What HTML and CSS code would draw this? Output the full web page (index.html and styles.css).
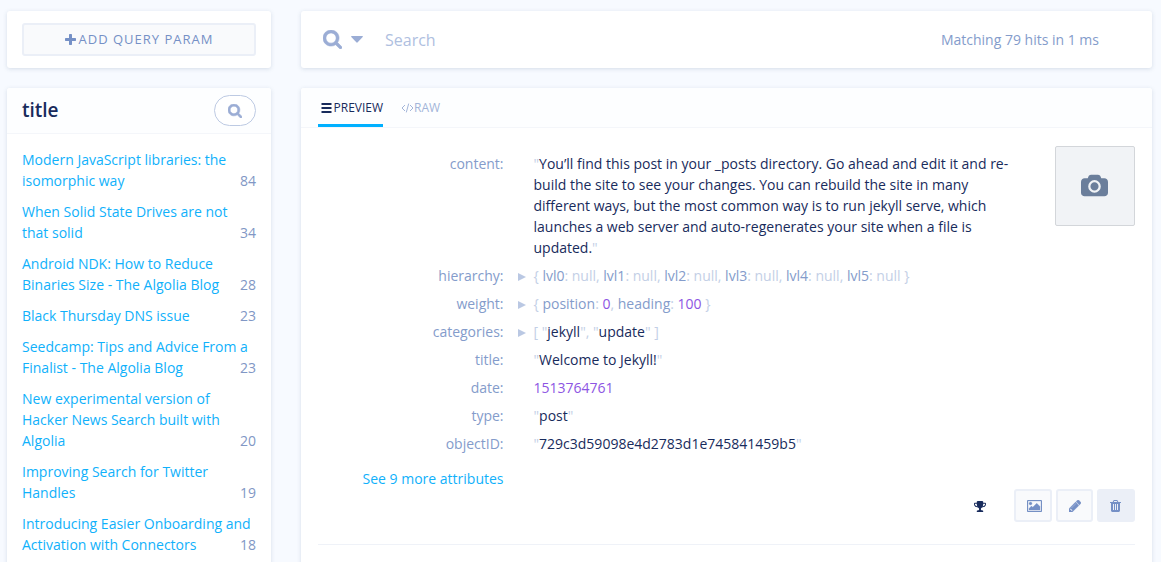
FILE: index.html
```html
<!DOCTYPE html>
<html lang="en">
<head>
<meta charset="utf-8">
<title>Index browser</title>
<link rel="stylesheet" href="styles.css">
</head>
<body>
<svg class="sprite" aria-hidden="true">
  <symbol id="search" viewBox="64 128 1664 1664"><path d="M1216 832q0-185-131.500-316.500t-316.500-131.500-316.500 131.500-131.500 316.500 131.500 316.500 316.500 131.500 316.500-131.500 131.500-316.500zm512 832q0 52-38 90t-90 38q-54 0-90-38l-343-342q-179 124-399 124-143 0-273.500-55.500t-225-150-150-225-55.500-273.500 55.500-273.500 150-225 225-150 273.500-55.500 273.500 55.500 225 150 150 225 55.500 273.500q0 220-124 399l343 343q37 37 37 90z"/></symbol>
</svg>
<div class="page">
  <aside class="sidebar">
    <section class="card param-card">
      <button class="param-button"><svg class="plus" viewBox="192 128 1408 1408"><path d="M1600 736v192q0 40-28 68t-68 28h-416v416q0 40-28 68t-68 28h-192q-40 0-68-28t-28-68v-416h-416q-40 0-68-28t-28-68v-192q0-40 28-68t68-28h416v-416q0-40 28-68t68-28h192q40 0 68 28t28 68v416h416q40 0 68 28t28 68z"/></svg><span>ADD QUERY PARAM</span></button>
    </section>
    <section class="card facet-card">
      <header class="facet-header"><h2>title</h2><button class="pill"><svg><use href="#search"/></svg></button></header>
      <ul class="facets">
        <li><a>Modern JavaScript libraries: the<br>isomorphic way</a><span>84</span></li>
        <li><a>When Solid State Drives are not<br>that solid</a><span>34</span></li>
        <li><a>Android NDK: How to Reduce<br>Binaries Size - The Algolia Blog</a><span>28</span></li>
        <li><a>Black Thursday DNS issue</a><span>23</span></li>
        <li><a>Seedcamp: Tips and Advice From a<br>Finalist - The Algolia Blog</a><span>23</span></li>
        <li><a>New experimental version of<br>Hacker News Search built with<br>Algolia</a><span>20</span></li>
        <li><a>Improving Search for Twitter<br>Handles</a><span>19</span></li>
        <li><a>Introducing Easier Onboarding and<br>Activation with Connectors</a><span>18</span></li>
      </ul>
    </section>
  </aside>
  <main class="main">
    <section class="card search-card">
      <svg class="search-icon"><use href="#search"/></svg>
      <svg class="caret" viewBox="0 0 12 7"><path d="M.8 0h10.400q1.100.1.500 1L6.700 6.300q-.7.700-1.400 0L.3 1Q-.3.100.8 0z"/></svg>
      <span class="placeholder">Search</span>
      <span class="stats">Matching 79 hits in 1 ms</span>
    </section>
    <section class="card results">
      <nav class="tabs">
        <a class="tab active"><svg class="bars" viewBox="0 0 11 10"><path d="M.5 0h10v2H.5zM.5 4h10v2H.5zM.5 8h10v2H.5z"/></svg>PREVIEW</a>
        <a class="tab"><svg class="code" viewBox="0 0 13 10"><path d="M4 2 1 5l3 3M9 2l3 3-3 3M7.700.6 5.300 9.400"/></svg>RAW</a>
      </nav>
      <article class="hit">
        <div class="hit-top">
          <dl class="attributes">
            <dt>content:</dt><i></i><dd><s>"</s>You’ll find this post in your _posts directory. Go ahead and edit it and re-<br>build the site to see your changes. You can rebuild the site in many<br>different ways, but the most common way is to run jekyll serve, which<br>launches a web server and auto-regenerates your site when a file is<br>updated.<s>"</s></dd>
            <dt>hierarchy:</dt><i class="arrow"></i><dd><s>{ <b>lvl0</b>: null, <b>lvl1</b>: null, <b>lvl2</b>: null, <b>lvl3</b>: null, <b>lvl4</b>: null, <b>lvl5</b>: null }</s></dd>
            <dt>weight:</dt><i class="arrow"></i><dd><s>{ <b>position</b>: <em>0</em>, <b>heading</b>: <em>100</em> }</s></dd>
            <dt>categories:</dt><i class="arrow"></i><dd><s>[ "</s>jekyll<s>", "</s>update<s>" ]</s></dd>
            <dt>title:</dt><i></i><dd><s>"</s>Welcome to Jekyll!<s>"</s></dd>
            <dt>date:</dt><i></i><dd><em>1513764761</em></dd>
            <dt>type:</dt><i></i><dd><s>"</s>post<s>"</s></dd>
            <dt>objectID:</dt><i></i><dd><s>"</s>729c3d59098e4d2783d1e745841459b5<s>"</s></dd>
          </dl>
          <div class="thumb"><svg viewBox="-64 128 1920 1536"><path d="M896 672q119 0 203.500 84.500t84.500 203.500-84.500 203.500-203.500 84.500-203.500-84.500-84.500-203.500 84.500-203.500 203.500-84.500zm704-288q106 0 181 75t75 181v768q0 106-75 181t-181 75h-1408q-106 0-181-75t-75-181v-768q0-106 75-181t181-75h224l51-136q19-49 69.500-84.500t103.500-35.500h512q53 0 103.500 35.500t69.500 84.500l51 136zm-704 1024q185 0 316.500-131.500t131.500-316.500-131.500-316.500-316.500-131.500-316.500 131.500-131.500 316.500 131.500 316.500 316.500 131.500z"/></svg></div>
        </div>
        <a class="more">See 9 more attributes</a>
        <div class="actions">
          <svg class="trophy" viewBox="64 128 1664 1536"><path d="M522 883q-74-162-74-371h-256v96q0 78 94.500 162t235.500 113zm1078-275v-96h-256q0 209-74 371 141-29 235.500-113t94.500-162zm128-128v128q0 71-41.500 143t-112 130-173 97.500-215.500 44.500q-42 54-95 95-38 34-52.500 72.500t-14.500 89.500q0 54 30.500 91t97.500 37q75 0 133.500 45.500t58.500 114.500v64q0 14-9 23t-23 9h-832q-14 0-23-9t-9-23v-64q0-69 58.500-114.500t133.500-45.500q67 0 97.500-37t30.500-91q0-51-14.500-89.500t-52.500-72.500q-53-41-95-95-113-5-215.500-44.500t-173-97.500-112-130-41.500-143v-128q0-40 28-68t68-28h288v-96q0-66 47-113t113-47h576q66 0 113 47t47 113v96h288q40 0 68 28t28 68z"/></svg>
          <button class="action"><svg class="picture" viewBox="-64 128 1920 1536"><path d="M576 576q0 80-56 136t-136 56-136-56-56-136 56-136 136-56 136 56 56 136zm1024 384v448h-1408v-192l320-320 160 160 512-512zm96-704h-1600q-13 0-22.500 9.500t-9.500 22.500v1216q0 13 9.500 22.500t22.500 9.500h1600q13 0 22.500-9.500t9.500-22.500v-1216q0-13-9.500-22.500t-22.500-9.500zm160 32v1216q0 66-47 113t-113 47h-1600q-66 0-113-47t-47-113v-1216q0-66 47-113t113-47h1600q66 0 113 47t47 113z"/></svg></button>
          <button class="action edit"><svg class="pencil" viewBox="128 149 1515 1515"><path d="M491 1536l91-91-235-235-91 91v107h128v128h107zm523-928q0-22-22-22-10 0-17 7l-542 542q-7 7-7 17 0 22 22 22 10 0 17-7l542-542q7-7 7-17zm-54-192l416 416-832 832h-416v-416zm683 96q0 53-37 90l-166 166-416-416 166-165q36-38 90-38 53 0 91 38l235 234q37 39 37 91z"/></svg></button>
          <button class="action filled"><svg class="trash" viewBox="192 128 1408 1536"><path d="M704 1376v-704q0-14-9-23t-23-9h-64q-14 0-23 9t-9 23v704q0 14 9 23t23 9h64q14 0 23-9t9-23zm256 0v-704q0-14-9-23t-23-9h-64q-14 0-23 9t-9 23v704q0 14 9 23t23 9h64q14 0 23-9t9-23zm256 0v-704q0-14-9-23t-23-9h-64q-14 0-23 9t-9 23v704q0 14 9 23t23 9h64q14 0 23-9t9-23zm-544-992h448l-48-117q-7-9-17-11h-317q-10 2-17 11zm928 32v64q0 14-9 23t-23 9h-96v948q0 83-47 143.500t-113 60.500h-832q-66 0-113-58.500t-47-141.500v-952h-96q-14 0-23-9t-9-23v-64q0-14 9-23t23-9h309l70-167q15-37 54-63t79-26h320q40 0 79 26t54 63l70 167h309q14 0 23 9t9 23z"/></svg></button>
        </div>
      </article>
    </section>
  </main>
</div>
</body>
</html>
```
FILE: styles.css
```css
* { box-sizing: border-box; }
body { margin: 0; height: 562px; overflow: hidden; background: #f7faff; color: #182b5c; font: 14px/21px "Open Sans", sans-serif; }
svg { display: block; fill: currentColor; flex: none; }
button { font: inherit; padding: 0; }
.sprite { display: none; }
.page { display: grid; grid-template-columns: 264px 851px; gap: 30px; padding: 11px 0 0 7px; }
.sidebar, .main { display: flex; flex-direction: column; gap: 20px; }
.card { background: #fff; border-radius: 3px; box-shadow: 0 1px 4px rgba(50, 80, 120, .17); }
.param-card { height: 57px; padding: 12px 15px; }
.param-button { display: flex; align-items: center; justify-content: center; gap: 3px; width: 234px; height: 33px; border: 2px solid #ebeff7; border-radius: 3px; background: #f9fafc; color: #7590c6; font-size: 13px; letter-spacing: 1px; }
.plus { width: 11px; height: 11px; }
.facet-card, .results { height: 500px; }
.facet-header { display: flex; align-items: center; justify-content: space-between; height: 46px; padding: 0 15px; border-bottom: 1px solid #f4f6fa; background: #fdfeff; border-radius: 3px 3px 0 0; }
h2 { margin: 0; font-size: 19px; line-height: 28px; font-weight: 600; padding-bottom: 2px; }
.pill { display: flex; align-items: center; justify-content: center; width: 42px; height: 31px; border: 1px solid #bdcae3; border-radius: 16px; background: #fff; color: #9badd5; }
.pill svg { width: 14px; height: 14px; stroke: currentColor; stroke-width: 70px; }
.facets { list-style: none; margin: 0; padding: 15px 15px 0; display: flex; flex-direction: column; gap: 10px; }
.facets li { display: flex; justify-content: space-between; align-items: flex-end; color: #8197c5; }
.facets a { flex: 1; min-width: 0; width: 0; color: #10b1fb; white-space: nowrap; }
.search-card { height: 57px; display: flex; align-items: center; padding: 0 53px 0 22px; }
.search-icon { width: 19px; height: 19px; color: #9badd5; stroke: currentColor; stroke-width: 50px; }
.caret { width: 12px; height: 7px; margin: 0 22px 0 9px; color: #9badd5; }
.placeholder { font-size: 16px; color: #afc0df; flex: 1; padding-top: 2px; }
.stats { color: #849ccb; }
.tabs { display: flex; gap: 18px; height: 40px; padding-left: 17px; border-bottom: 1px solid #f4f6fa; background: #fdfeff; border-radius: 3px 3px 0 0; }
.tab { display: flex; align-items: center; height: 39px; font-size: 12px; color: #a3b5d9; padding-top: 3px; border-bottom: 3px solid transparent; }
.tab.active { color: #182b5c; border-color: #00b0ff; width: 65px; }
.bars { width: 11px; height: 10px; margin: 0 2px 0 2.500px; }
.code { width: 13px; height: 10px; fill: none; stroke: currentColor; stroke-width: 1; }
.hit { margin: 0 17px; height: 417px; border-bottom: 1px solid #eff2f8; }
.hit-top { display: flex; justify-content: space-between; padding-top: 18px; }
.attributes { display: grid; grid-template-columns: 185.500px 30px 500px; row-gap: 7px; margin: 7px 0 0; }
dt { text-align: right; color: #849ccb; }
dd { margin: 0; white-space: nowrap; }
s { text-decoration: none; color: #c3cfe6; }
b { font-weight: 400; color: #849ccb; }
em { font-style: normal; color: #8d55e3; }
.arrow { justify-self: start; align-self: center; margin: 2px 0 0 14px; border-left: 8px solid #bac8e3; border-top: 4px solid transparent; border-bottom: 4px solid transparent; }
.thumb { display: flex; align-items: center; justify-content: center; width: 80px; height: 80px; border: 1px solid #d3d6da; border-radius: 2px; background: #f1f3f6; color: #6b7e9b; }
.thumb svg { width: 27px; height: 23px; margin: 0 1px 2px 0; }
.more { display: block; width: 185.500px; margin-top: 14px; text-align: right; color: #10b1fb; }
.actions { display: flex; justify-content: flex-end; align-items: center; gap: 4px; }
.trophy { width: 12px; height: 11px; margin: 2px 24px 0 0; }
.action { display: flex; align-items: center; justify-content: center; width: 38px; height: 33px; border: 2px solid #ebeff7; border-radius: 3px; background: #f9fafc; color: #7590c6; }
.edit { width: 37px; }
.filled { background: #ebeff7; }
.picture { width: 15px; height: 12px; margin-left: 3px; stroke: currentColor; stroke-width: 40px; }
.pencil { width: 12px; height: 12px; stroke: currentColor; stroke-width: 50px; }
.trash { width: 11px; height: 12px; margin-right: 2px; }
```
